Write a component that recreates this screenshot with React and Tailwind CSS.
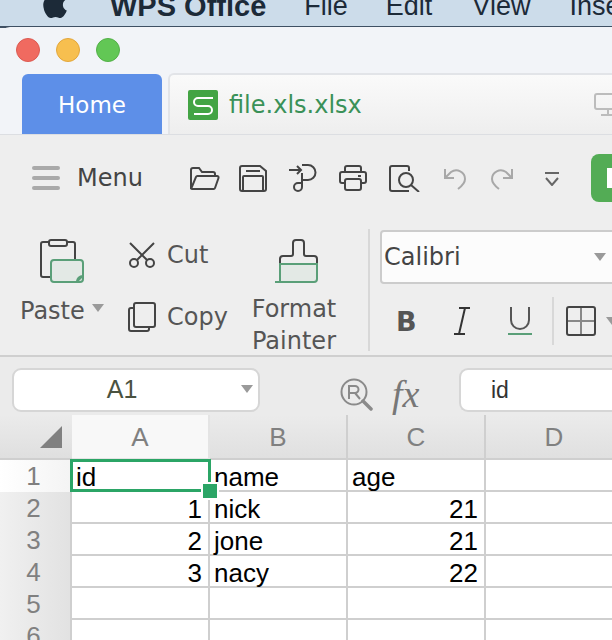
import { FaApple } from "react-icons/fa";

const ui = "font-['DejaVu_Sans',sans-serif]";
const sheet = "font-['Liberation_Sans',Arial,sans-serif]";

const Caret = ({ className }) => (
  <svg width="12" height="8" viewBox="0 0 12 8" className={`shrink-0 ${className}`}>
    <path d="M0 0H12L6 8Z" fill="#9a9a9a" />
  </svg>
);

const toolIcons = [
  // open
  { w: 31, h: 25, ml: 0, paths: <><path d="M2 22V4a2 2 0 0 1 2-2h6l3 4h11a2 2 0 0 1 2 2v2" /><path d="M2 23 7 11a1.500 1.500 0 0 1 1.500-1H28a1.500 1.500 0 0 1 1.500 2L26 22a1.500 1.500 0 0 1-1.500 1H3a1 1 0 0 1-1-1Z" /></> },
  // save
  { w: 28, h: 27, ml: 19, paths: <><path d="M3 1h18l6 5v18a2 2 0 0 1-2 2H3a2 2 0 0 1-2-2V3a2 2 0 0 1 2-2Z" /><path d="M4 26V12a1 1 0 0 1 1-1h18a1 1 0 0 1 1 1v14M7 6h14" /></> },
  // send
  { w: 29, h: 28, ml: 22, paths: <><path d="M0 6H12M8 2l4 4-4 4" /><path d="M13 1h6a7.500 7.500 0 0 1 0 15h-6" /><path d="M13 9v14a4 4 0 1 1-4-4h4" /></> },
  // print
  { w: 28, h: 26, ml: 21, paths: <><path d="M6 7V3a2 2 0 0 1 2-2h12a2 2 0 0 1 2 2v4" /><path d="M6 18H3a2 2 0 0 1-2-2V9a2 2 0 0 1 2-2h22a2 2 0 0 1 2 2v7a2 2 0 0 1-2 2h-3" /><rect x="6" y="14" width="16" height="11" rx="2" /><path d="M19 11h3" /></> },
  // preview
  { w: 31, h: 27, ml: 22, paths: <><path d="M20 26H3a2 2 0 0 1-2-2V3a2 2 0 0 1 2-2h15a2 2 0 0 1 2 2v3" /><circle cx="17" cy="15" r="7" /><path d="m22 20 8 7" /></> },
  // undo
  { w: 24, h: 23, ml: 23, stroke: "#a8a8a8", paths: <><path d="M2 2v9h9" /><path d="M2 11 8 5c6-4 14 0 14 7 0 4-3 7-7 10" /></> },
  // redo
  { w: 24, h: 23, ml: 23, stroke: "#a8a8a8", paths: <><path d="M22 2v9h-9" /><path d="M22 11 16 5C10 1 2 5 2 12c0 4 3 7 7 10" /></> },
  // more
  { w: 16, h: 15, ml: 30, stroke: "#666", paths: <><path d="M1 2h14M2 7l6 7 6-7" /></> },
];

const Tool = ({ w, h, ml, stroke = "#444", paths }) => (
  <svg width={w} height={h} viewBox={`0 0 ${w} ${h}`} fill="none" stroke={stroke} strokeWidth="2" className="shrink-0" style={{ marginLeft: ml }}>
    {paths}
  </svg>
);

const rows = [
  ["id", "name", "age"],
  ["1", "nick", "21"],
  ["2", "jone", "21"],
  ["3", "nacy", "22"],
  ["", "", ""],
  ["", "", ""],
];

export default function App() {
  return (
    <div className="w-[612px] h-[640px] overflow-hidden bg-[#f2f4f8]">
      {/* mac menu bar */}
      <div className="h-[28px] bg-[#ccdcea] border-b-2 border-[#3f5063] overflow-hidden text-[#1c2a38] font-['Liberation_Sans',sans-serif] text-[27px] leading-[28px]">
        <div className="flex items-center h-[28px] -mt-[8px] whitespace-nowrap">
          <FaApple className="ml-[40px] w-[30px] h-[32px] shrink-0 text-[#1c2a38] -mt-[4px]" />
          <span className="ml-[40px] shrink-0 font-bold text-[29px]">WPS Office</span>
          <span className="ml-[38px] shrink-0">File</span>
          <span className="ml-[38px] shrink-0">Edit</span>
          <span className="ml-[40px] shrink-0">View</span>
          <span className="ml-[39px] shrink-0">Insert</span>
        </div>
      </div>

      {/* window */}
      <div className="-mt-px rounded-tl-[10px] bg-[#f2f4f8] relative">
        <div className="h-[48px] flex items-center gap-4 pl-4 pb-[2px]">
          <span className="w-6 h-6 rounded-full bg-[#f06a60] border border-[#dc5a52]" />
          <span className="w-6 h-6 rounded-full bg-[#f7bf4f] border border-[#e3a73c]" />
          <span className="w-6 h-6 rounded-full bg-[#62c755] border border-[#53b048]" />
        </div>
        <div className={`h-[60px] flex items-end pl-[22px] border-b border-[#dcdee2] ${ui}`}>
          <div className="w-[140px] shrink-0 h-[60px] pt-[2px] rounded-t-[6px] bg-[#5d8fe8] text-white text-[23px] flex items-center justify-center">Home</div>
          <div className="ml-[6px] w-[450px] shrink-0 h-[61px] rounded-tl-[6px] border-l-2 border-t-2 border-[#e2e4e8] bg-gradient-to-b from-[#fafafa] to-[#eeeeee] flex items-center pl-[18px]">
            <svg width="30" height="30" viewBox="0 0 30 30" className="shrink-0">
              <rect width="30" height="30" rx="2" fill="#43a444" />
              <path d="M25 8H10a4 4 0 0 0 0 8h10a4 4 0 0 1 0 8H6" fill="none" stroke="#fff" strokeWidth="2" />
            </svg>
            <span className="ml-[11px] shrink-0 text-[24px] text-[#3a9158]">file.xls.xlsx</span>
            <svg width="28" height="24" viewBox="0 0 28 24" fill="none" stroke="#bcbcbc" strokeWidth="2" className="ml-[232px] shrink-0">
              <rect x="1" y="1" width="26" height="15" rx="2" />
              <path d="M14 16v6M7 22h14" />
            </svg>
          </div>
        </div>
      </div>

      {/* toolbar */}
      <div className={`h-[222px] overflow-hidden bg-[#eeeeee] border-b-2 border-[#cfcfcf] text-[#555] ${ui}`}>
        <div className="h-[84px] flex items-center pl-[32px] pt-[2px] whitespace-nowrap">
          <div className="w-[28px] shrink-0 flex flex-col gap-[6px]">
            <span className="h-[4px] rounded-sm bg-[#a9a9a9]" />
            <span className="h-[4px] rounded-sm bg-[#a9a9a9]" />
            <span className="h-[4px] rounded-sm bg-[#a9a9a9]" />
          </div>
          <span className="ml-[17px] w-[67px] shrink-0 text-[24px] text-[#444]">Menu</span>
          <div className="ml-[45px] flex items-center shrink-0">
            {toolIcons.map((icon, i) => (
              <Tool key={i} {...icon} />
            ))}
          </div>
          <div className="ml-[31px] w-[40px] h-[48px] shrink-0 rounded-[8px] bg-[#53ac55] flex items-center pl-[16px]">
            <span className="w-[6px] h-[20px] bg-white" />
          </div>
        </div>

        <div className="h-[136px] flex">
          {/* paste */}
          <div className="w-[98px] pl-[20px] pt-[20px] shrink-0">
            <svg width="44" height="45" viewBox="0 0 44 45" fill="none" className="ml-[20px]">
              <path d="M10 38H3a2 2 0 0 1-2-2V5a2 2 0 0 1 2-2h30a2 2 0 0 1 2 2v15" stroke="#444" strokeWidth="2" />
              <rect x="9" y="1" width="18" height="6" rx="2" fill="#eeeeee" stroke="#444" strokeWidth="2" />
              <rect x="11" y="21" width="32" height="22" rx="3" fill="#e3e9e5" stroke="#5a9f78" strokeWidth="2" />
              <path d="M36 43c0-4 3-7 7-7v2l-5 5Z" fill="#5a9f78" />
            </svg>
            <div className="mt-[11px] flex items-center">
              <span className="text-[24px] leading-[32px] w-[65px] shrink-0">Paste</span>
              <Caret className="ml-[7px] -mt-[6px]" />
            </div>
          </div>

          {/* cut, copy */}
          <div className="w-[138px] shrink-0 pl-[30px] pt-[20px]">
            <div className="flex items-center h-[32px]">
              <svg width="28" height="26" viewBox="0 0 28 26" fill="none" stroke="#444" strokeWidth="2" className="shrink-0">
                <path d="M2 1 19 18M26 1 9 18" />
                <circle cx="6" cy="21" r="4" />
                <circle cx="22" cy="21" r="4" />
              </svg>
              <span className="ml-[11px] text-[24px]">Cut</span>
            </div>
            <div className="flex items-center mt-[30px] h-[32px]">
              <svg width="28" height="30" viewBox="0 0 28 30" fill="none" stroke="#444" strokeWidth="2" className="shrink-0">
                <rect x="6" y="1" width="21" height="24" rx="2" />
                <path d="M6 6H3a2 2 0 0 0-2 2v19a2 2 0 0 0 2 2h16a2 2 0 0 0 2-2v-2" />
              </svg>
              <span className="ml-[11px] text-[24px]">Copy</span>
            </div>
          </div>

          {/* format painter */}
          <div className="w-[116px] shrink-0 flex flex-col items-center pt-[20px]">
            <svg width="43" height="45" viewBox="0 0 43 45" fill="none" className="ml-[4px] shrink-0">
              <path d="M5 25V20a3 3 0 0 1 3-3h8a2 2 0 0 0 2-2V4a3 3 0 0 1 3-3h5a3 3 0 0 1 3 3v11a2 2 0 0 0 2 2h8a3 3 0 0 1 3 3v5" stroke="#444" strokeWidth="2" />
              <path d="M0 43h39a3 3 0 0 0 3-3V25H5v18" fill="#e3e9e5" stroke="#5a9f78" strokeWidth="2" />
            </svg>
            <div className="mt-[9px] text-center text-[24px] leading-[32px] whitespace-nowrap">
              Format<br />Painter
            </div>
          </div>

          <div className="ml-[16px] w-[2px] h-[122px] mt-[10px] bg-[#d8d8d8] shrink-0" />

          {/* font */}
          <div className="ml-[10px] w-[260px] shrink-0 pt-[11px]">
            <div className="w-[260px] h-[54px] rounded-[4px] border-2 border-[#cccccc] bg-[#fcfcfc] flex items-center pl-[2px] text-[24px] text-[#444]">
              Calibri
              <Caret className="ml-[133px]" />
            </div>
            <div className="mt-[13px] flex items-center h-[48px]">
              <span className="ml-[16px] w-[22px] shrink-0 text-[27px] font-bold leading-none text-[#555]">B</span>
              <svg width="18" height="28" viewBox="0 0 18 28" fill="none" stroke="#333" strokeWidth="2" className="ml-[35px] shrink-0">
                <path d="M6 1h11M1 27h11M12 1 6 27" />
              </svg>
              <svg width="24" height="30" viewBox="0 0 24 30" fill="none" strokeWidth="2" className="ml-[37px] shrink-0">
                <path d="M3 1v13a9 9 0 0 0 18 0V1" stroke="#555" />
                <path d="M0 28h24" stroke="#5a9f78" />
              </svg>
              <div className="ml-[20px] w-[2px] h-[48px] shrink-0 bg-[#d8d8d8]" />
              <svg width="30" height="30" viewBox="0 0 30 30" fill="none" className="ml-[12px] shrink-0">
                <path d="M15 2v26M2 15h26" stroke="#888" strokeWidth="2" />
                <rect x="1" y="1" width="28" height="28" rx="2" stroke="#444" strokeWidth="2" />
              </svg>
              <Caret className="ml-[10px]" />
            </div>
          </div>
        </div>
      </div>

      {/* formula bar */}
      <div className="h-[58px] bg-[#ebebeb] flex items-start pt-[11px] pl-[12px]">
        <div className="relative w-[248px] h-[44px] shrink-0 rounded-[9px] border-2 border-[#d6d6d6] bg-white flex items-center justify-center pr-[28px] text-[25px] text-[#4a5240] font-['Liberation_Sans',sans-serif]">
          A1
          <Caret className="absolute right-[5px] top-[15px]" />
        </div>
        <svg width="33" height="33" viewBox="0 0 33 33" fill="none" stroke="#8a8a8a" strokeWidth="2" className="ml-[80px] mt-[10px] shrink-0">
          <circle cx="14" cy="14" r="12.500" />
          <path d="M9 21V8h6a3.500 3.500 0 0 1 0 7H9M15 15l5 6" />
          <path d="m23 23 8 8" strokeWidth="3.500" strokeLinecap="round" />
        </svg>
        <span className="ml-[19px] mt-[7px] w-[36px] shrink-0 font-['Liberation_Serif',serif] italic text-[38px] leading-none text-[#777]">fx</span>
        <div className="ml-[31px] w-[160px] shrink-0 h-[44px] rounded-l-[9px] border-2 border-r-0 border-[#d6d6d6] bg-white flex items-center pl-[30px] text-[23px] text-[#333] font-['Liberation_Sans',sans-serif]">
          id
        </div>
      </div>

      {/* sheet */}
      <div className={`grid grid-cols-[72px_138px_138px_138px_138px] ${sheet} text-[26px] leading-[30px] text-black bg-white`}>
        <div className="h-[45px] bg-gradient-to-b from-[#ebebeb] to-[#dfdfdf] border-b-2 border-[#cfcfcf] flex items-end justify-end pr-[10px] pb-[10px]">
          <svg width="22" height="22" viewBox="0 0 22 22"><path d="M22 0V22H0Z" fill="#808080" /></svg>
        </div>
        {["A", "B", "C", "D"].map((col, i) => (
          <div
            key={col}
            className={`h-[45px] border-b-2 border-r-2 flex items-center justify-center text-[26px] text-[#808080] ${
              i === 0 ? "bg-[#f8f8f8] border-[#e4e4e4]" : "bg-gradient-to-b from-[#ebebeb] to-[#e0e0e0] border-[#cfcfcf]"
            }`}
          >
            {col}
          </div>
        ))}
        {rows.map((row, r) => (
          <div key={r} className="contents">
            <div
              className={`h-[32px] border-r-2 border-[#cfcfcf] flex items-center justify-center pr-[3px] text-[#808080] ${
                r === 0 ? "bg-gradient-to-r from-white to-[#f4f4f4]" : "bg-gradient-to-r from-[#f0f0f0] to-[#e2e2e2]"
              }`}
            >
              {r + 1}
            </div>
            {row.map((val, c) => (
              <div
                key={c}
                className={`relative h-[32px] border-r-2 border-b-2 border-[#cfcfcf] whitespace-nowrap pt-[2px] ${
                  /^\d+$/.test(val) ? "text-right pr-[6px]" : "pl-[4px]"
                } ${r === 0 && c === 0 ? "z-10" : ""}`}
              >
                {val}
                {r === 0 && c === 0 && (
                  <>
                    <div className="absolute -left-[2px] -top-[1px] w-[141px] h-[33px] border-[3px] border-[#2ba566]" />
                    <div className="absolute -right-[9px] -bottom-[8px] w-[14px] h-[14px] bg-[#2ba566] outline-2 outline-white" />
                  </>
                )}
              </div>
            ))}
            <div className="h-[32px] border-r-2 border-b-2 border-[#cfcfcf]" />
          </div>
        ))}
      </div>
    </div>
  );
}
